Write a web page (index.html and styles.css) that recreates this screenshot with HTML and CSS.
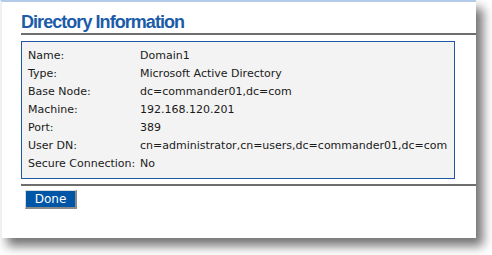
FILE: index.html
```html
<!DOCTYPE html>
<html>
<head>
<meta charset="utf-8">
<link rel="stylesheet" href="styles.css">
</head>
<body>
<div class="panel">
  <h1 class="title">Directory Information</h1>
  <div class="info">
    <div class="row"><span class="label">Name:</span><span class="value">Domain1</span></div>
    <div class="row"><span class="label">Type:</span><span class="value">Microsoft Active Directory</span></div>
    <div class="row"><span class="label">Base Node:</span><span class="value">dc=commander01,dc=com</span></div>
    <div class="row"><span class="label">Machine:</span><span class="value">192.168.120.201</span></div>
    <div class="row"><span class="label">Port:</span><span class="value">389</span></div>
    <div class="row"><span class="label">User DN:</span><span class="value">cn=administrator,cn=users,dc=commander01,dc=com</span></div>
    <div class="row"><span class="label">Secure Connection:</span><span class="value">No</span></div>
  </div>
  <div class="actions">
    <button class="btn">Done</button>
  </div>
</div>
</body>
</html>
```
FILE: styles.css
```css
html, body {
  margin: 0;
  padding: 0;
  background: #ffffff;
}
body {
  width: 492px;
  height: 255px;
  overflow: hidden;
}
.panel {
  width: 455px;
  height: 236px;
  background: #ffffff;
  border-top: 2px solid #b3cae8;
  border-left: 2px solid #f0f0f0;
  box-shadow: 7px 8px 10px rgba(0,0,0,0.55);
  padding-left: 19px;
  box-sizing: content-box;
}
.title {
  margin: 0;
  font-family: "Liberation Sans", Arial, sans-serif;
  font-weight: bold;
  font-size: 18px;
  color: #1b5ca8;
  height: 33px;
  line-height: 40px;
  box-sizing: border-box;
  border-bottom: 2px solid #6e6e6e;
  letter-spacing: -0.95px;
  white-space: nowrap;
}
.info {
  margin: 6px 21px 0 0;
  border: 1px solid #1f58a2;
  background: #f3f3f3;
  padding: 5px 0 5px 6px;
  font-family: "DejaVu Sans", Verdana, sans-serif;
  font-size: 11px;
  color: #1a1a1a;
}
.row {
  display: flex;
  height: 18px;
  line-height: 18px;
}
.label {
  width: 112px;
  flex: none;
}
.actions {
  margin-top: 5px;
  border-top: 2px solid #6e6e6e;
  padding: 4px 0 0 4px;
}
.btn {
  display: block;
  width: 52px;
  height: 19px;
  padding: 0;
  margin: 0;
  background: #0056a6;
  color: #ffffff;
  font-family: "DejaVu Sans", Verdana, sans-serif;
  font-size: 12px;
  border: none;
  border-right: 2px solid #8a8a8a;
  border-bottom: 2px solid #8a8a8a;
  border-left: 1px solid #d8d8d8;
  border-top: 1px solid #d8d8d8;
}
```
